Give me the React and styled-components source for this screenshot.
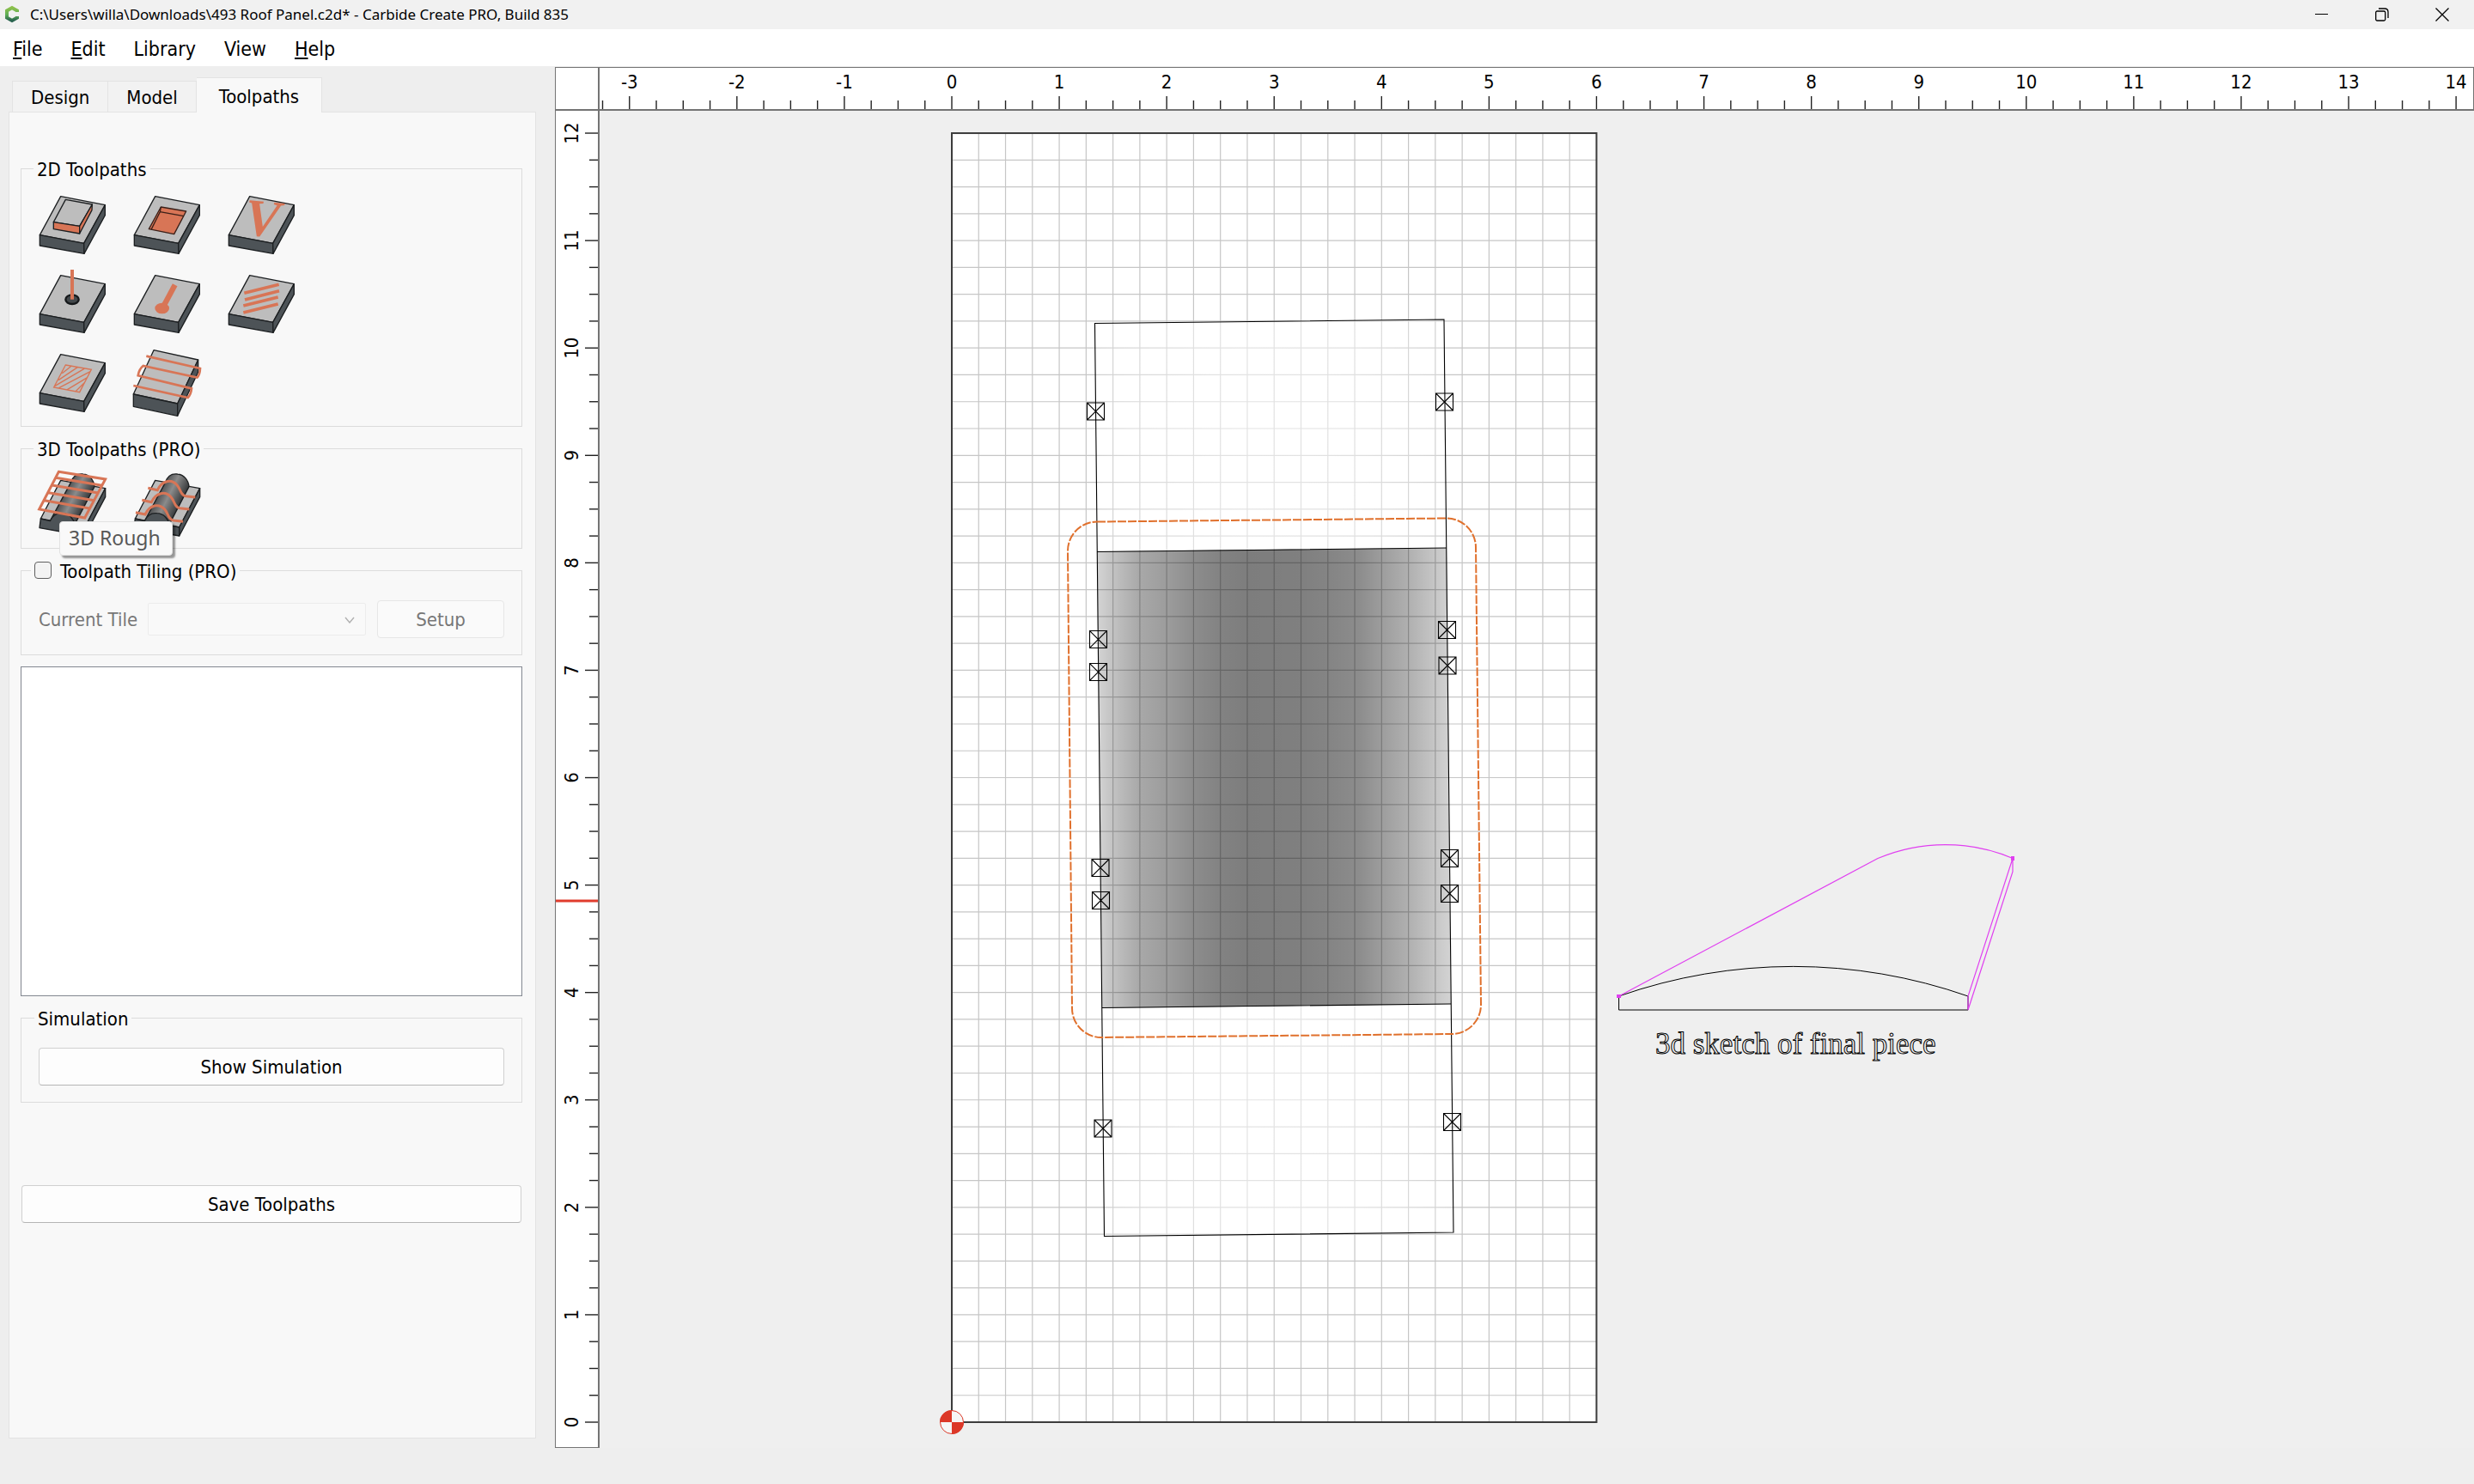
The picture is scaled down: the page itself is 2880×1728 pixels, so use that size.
import React from "react";
import styled, { createGlobalStyle, css } from "styled-components";

const GlobalStyle = createGlobalStyle`
  * {
    box-sizing: border-box;
  }
  body {
    margin: 0;
    background: #eeeeee;
    color: #000;
    font-family: "DejaVu Sans Condensed", "DejaVu Sans", sans-serif;
    font-size: 22px;
    line-height: 26px;
  }
  button,
  select,
  input {
    font: inherit;
    color: inherit;
  }
`;

// canvas scale: pixels per inch, and where the zero point sits in the view
const INCH = 125.08;
const ORIGIN_X = 410;
const ORIGIN_Y = 1527;

const ORANGE = "#d87556";
const TOP = "#bdbdbd";
const SIDE = "#4d5357";

const range = (from, to) =>
  Array.from({ length: to - from + 1 }, (_, i) => from + i);

/* ---------- toolpath icons ---------- */

const Block = () => (
  <g stroke="#1c1f21" strokeWidth="4" strokeLinejoin="round">
    <polygon points="80,20 235,50 161,184 7,155" fill={TOP} />
    <polygon points="7,155 161,184 162,220 7,192" fill={SIDE} />
    <polygon points="161,184 235,50 235,86 162,220" fill={SIDE} />
  </g>
);

const ContourIcon = () => (
  <>
    <Block />
    <g stroke="#1c1f21" strokeWidth="4" strokeLinejoin="round">
      <polygon points="97,31 190,48 146,124 55,110" fill={TOP} />
      <polygon points="55,110 146,124 146,150 55,134" fill={ORANGE} />
      <polygon points="146,124 190,48 189,68 146,150" fill={ORANGE} />
    </g>
  </>
);

const PocketIcon = () => (
  <>
    <Block />
    <g stroke="#3a2019" strokeWidth="4" strokeLinejoin="round">
      <polygon points="100,57 188,72 146,152 58,134" fill={ORANGE} />
      <path d="M100 57 L97 74 L180 89 M97 74 L66 136" fill="none" />
    </g>
  </>
);

const VCarveIcon = () => (
  <>
    <Block />
    <text
      x="58"
      y="156"
      fill={ORANGE}
      fontFamily="Liberation Serif, serif"
      fontSize="184"
      fontWeight="bold"
      fontStyle="italic"
      transform="rotate(5 90 154)"
    >
      V
    </text>
  </>
);

const DrillIcon = () => (
  <>
    <Block />
    <ellipse cx="120" cy="104" rx="23" ry="16" fill="#43484b" stroke="#15181a" strokeWidth="7" />
    <path d="M120 0 V104" stroke={ORANGE} strokeWidth="12" />
  </>
);

const KeyholeIcon = () => (
  <>
    <Block />
    <ellipse cx="104" cy="135" rx="25" ry="19" fill={ORANGE} />
    <path d="M149 53 L108 130" stroke={ORANGE} strokeWidth="19" />
  </>
);

const TextureIcon = () => (
  <>
    <Block />
    <path
      d="M61 82 L182 52 M63 105 L183 74 M58 126 L179 96 M58 150 L179 120"
      stroke={ORANGE}
      strokeWidth="11"
    />
  </>
);

const HatchIcon = () => (
  <>
    <Block />
    <path
      d="M97 57 L187 73 L146 152 L56 135 Z M85 86 L117 61 M72 110 L139 65 M60 130 L162 70 M74 137 L183 80 M103 143 L174 100 M132 149 L164 118"
      fill="none"
      stroke={ORANGE}
      strokeWidth="4"
    />
  </>
);

const FacingIcon = () => (
  <>
    <g stroke="#1c1f21" strokeWidth="4" strokeLinejoin="round">
      <polygon points="75,5 230,39 158,192 4,159" fill={TOP} />
      <polygon points="4,159 158,192 158,235 4,202" fill={SIDE} />
      <polygon points="158,192 230,39 230,82 158,235" fill={SIDE} />
    </g>
    <path
      d="M49 26 L237 69 Q236 92 226 101 L38 60 Q23 72 20 94 L207 139 Q205 160 194 171 L4 129"
      fill="none"
      stroke={ORANGE}
      strokeWidth="8"
    />
  </>
);

const Ridge = () => (
  <>
    <defs>
      <linearGradient id="ridge" gradientUnits="userSpaceOnUse" x1="78" y1="88" x2="166" y2="132">
        <stop offset="0" stopColor="#3d4042" />
        <stop offset="0.45" stopColor="#8b8b8b" />
        <stop offset="1" stopColor="#2d3032" />
      </linearGradient>
    </defs>
    <g stroke="#1c1f21" strokeWidth="4" strokeLinejoin="round">
      <polygon points="80,34 236,62 164,198 10,168" fill={TOP} />
      <polygon points="164,198 236,62 236,92 164,228" fill={SIDE} />
      <path
        d="M43 176 L116 40 C124 16 142 10 158 12 C180 14 196 32 198 56 L128 190 Z"
        fill="url(#ridge)"
      />
      <path
        d="M10 168 L43 176 C52 156 68 147 86 149 C110 150 126 168 130 191 L164 198 L164 228 L6 200 Z"
        fill={SIDE}
      />
    </g>
  </>
);

const RoughIcon = () => (
  <>
    <Ridge />
    <path
      d="M73 4 L236 30 L164 165 L5 135 Z M63 25 L224 52 M50 51 L211 78 M38 77 L197 104 M23 104 L181 132"
      fill="none"
      stroke={ORANGE}
      strokeWidth="9"
    />
  </>
);

const FinishIcon = () => (
  <>
    <Ridge />
    <path
      d="M55 61 L88 68 C104 34 136 28 156 50 C170 66 168 86 187 89 L220 93 M34 103 L67 110 C83 76 115 70 135 92 C149 108 147 128 166 131 L199 135 M12 146 L45 153 C61 119 93 113 113 135 C127 151 125 171 144 174 L177 178"
      fill="none"
      stroke={ORANGE}
      strokeWidth="9"
    />
  </>
);

const toolpaths2d = [
  { name: "Contour", Icon: ContourIcon },
  { name: "Pocket", Icon: PocketIcon },
  { name: "VCarve", Icon: VCarveIcon },
  { name: "Drill", Icon: DrillIcon },
  { name: "Keyhole", Icon: KeyholeIcon },
  { name: "Texture", Icon: TextureIcon },
  { name: "Engrave", Icon: HatchIcon },
  { name: "Facing", Icon: FacingIcon },
];

const toolpaths3d = [
  { name: "3D Rough", Icon: RoughIcon, tip: true },
  { name: "3D Finish", Icon: FinishIcon },
];

const ToolButtons = ({ tools }) => (
  <ToolGrid>
    {tools.map(({ name, Icon, tip }) => (
      <ToolCell key={name}>
        <ToolButton type="button" aria-label={name}>
          <svg viewBox="0 0 240 240" width="80" height="80">
            <Icon />
          </svg>
        </ToolButton>
        {tip && <Tooltip role="tooltip">{name}</Tooltip>}
      </ToolCell>
    ))}
  </ToolGrid>
);

/* ---------- rulers ---------- */

const TopRuler = () => (
  <RulerX>
    <svg width="100%" height="48">
      {range(-13, 57).map((q) => {
        const x = ORIGIN_X + (q * INCH) / 4;
        return (
          <path key={q} d={`M${x} ${q % 4 === 0 ? 33 : 38} V48`} stroke="#222" strokeWidth="1.4" />
        );
      })}
      {range(-3, 14).map((n) => (
        <RulerText key={n} x={ORIGIN_X + n * INCH} y="24">
          {n}
        </RulerText>
      ))}
    </svg>
  </RulerX>
);

const SideRuler = () => (
  <RulerY>
    <svg width="49" height="100%">
      {range(0, 48).map((q) => {
        const y = ORIGIN_Y - (q * INCH) / 4;
        return (
          <path key={q} d={`M${q % 4 === 0 ? 34 : 39} ${y} H49`} stroke="#222" strokeWidth="1.4" />
        );
      })}
      {range(0, 12).map((n) => {
        const y = ORIGIN_Y - n * INCH;
        return (
          <RulerText key={n} x="26" y={y} transform={`rotate(-90 26 ${y})`}>
            {n}
          </RulerText>
        );
      })}
      <path d="M0 920 H50" stroke="#e03c2d" strokeWidth="3" />
    </svg>
  </RulerY>
);

/* ---------- drawing ---------- */

const holes = [
  [577.5, 350],
  [983.5, 339],
  [580.5, 615.5],
  [580.5, 653.5],
  [986.5, 604.5],
  [987, 646],
  [583, 881.5],
  [583.5, 919.5],
  [989.5, 870.5],
  [989.5, 911.5],
  [586, 1185],
  [992.5, 1177.5],
];

const shades = [
  [0, 0.17],
  [0.06, 0.26],
  [0.12, 0.34],
  [0.2, 0.39],
  [0.275, 0.45],
  [0.35, 0.49],
  [0.43, 0.51],
  [0.58, 0.5],
  [0.66, 0.48],
  [0.74, 0.45],
  [0.81, 0.38],
  [0.89, 0.3],
  [1, 0.17],
];

const Shade = ({ id, color }) => (
  <linearGradient id={id}>
    {shades.map(([offset, opacity]) => (
      <stop key={offset} offset={offset} stopColor={color} stopOpacity={opacity} />
    ))}
  </linearGradient>
);

const Drawing = () => {
  const w = 6 * INCH;
  const h = 12 * INCH;
  const top = ORIGIN_Y - h;
  return (
    <svg width="100%" height="100%">
      <defs>
        <Shade id="dark" color="#000" />
        <Shade id="light" color="#fff" />
      </defs>

      {/* stock and grid */}
      <rect x={ORIGIN_X} y={top} width={w} height={h} fill="#fff" />
      <g stroke="#c6c6c6" strokeWidth="1.2">
        {range(1, 23).map((q) => (
          <path key={q} d={`M${ORIGIN_X + (q * INCH) / 4} ${top} v${h}`} />
        ))}
        {range(1, 47).map((q) => (
          <path key={q} d={`M${ORIGIN_X} ${top + (q * INCH) / 4} h${w}`} />
        ))}
      </g>
      <rect x={ORIGIN_X} y={top} width={w} height={h} fill="none" stroke="#3c3c3c" strokeWidth="2" />

      {/* part */}
      <polygon points="576,247 983,243 986,509 579,513" fill="url(#light)" />
      <polygon points="585,1045 991,1040 994,1306 587,1310" fill="url(#light)" />
      <polygon points="579,513 986,509 991,1040 585,1045" fill="url(#dark)" />
      <g fill="none" stroke="#000" strokeWidth="1.1">
        <polygon points="576.5,247.5 983,243 994,1306 587.5,1310.5" />
        <path d="M579 513.5 L986 509 M585 1044.5 L991 1040" />
        {holes.map(([x, y]) => (
          <path
            key={`${x}-${y}`}
            d={`M${x - 10} ${y - 10} h20 v20 h-20 Z l20 20 m0 -20 l-20 20`}
          />
        ))}
      </g>
      <path
        d="M579 478.5 L986 474.5 A34 34 0 0 1 1020 508 L1026 1040 A34 34 0 0 1 992 1075 L585 1079 A34 34 0 0 1 550 1045 L545 513 A34 34 0 0 1 579 478.5 Z"
        fill="none"
        stroke="#e0702c"
        strokeWidth="2"
        strokeDasharray="10 2"
      />

      {/* sketch beside the stock */}
      <g fill="none">
        <path d="M1186.5 1031 V1047 H1593 V1031 A614 614 0 0 0 1186.5 1031" stroke="#000" />
        <path
          d="M1186.5 1031 L1488 870.5 A201 201 0 0 1 1645 870.5 V886 L1593 1047 V1031 L1645 870.5"
          stroke="#e03ff0"
          strokeWidth="1.2"
        />
      </g>
      <rect x="1184" y="1029" width="5" height="4" fill="#e03ff0" />
      <rect x="1643" y="868" width="4" height="5" fill="#e03ff0" />
      <SketchText x="1229" y="1098">
        3d sketch of final piece
      </SketchText>

      {/* zero point */}
      <g transform={`translate(${ORIGIN_X} ${ORIGIN_Y})`}>
        <circle r="13.5" fill="#f6f6f6" stroke="#dc3828" />
        <path
          d="M0 0 H-14 A14 14 0 0 1 0 -14 Z M0 0 H14 A14 14 0 0 1 0 14 Z"
          fill="#dc3828"
        />
      </g>
    </svg>
  );
};

/* ---------- page ---------- */

const App = () => {
  return (
    <Window>
      <GlobalStyle />
      <TitleBar>
        <svg width="18" height="22" viewBox="0 0 18 22">
          <defs>
            <linearGradient id="logo" x1="0" y1="0" x2="0" y2="1">
              <stop offset="0" stopColor="#8cc04b" />
              <stop offset="0.55" stopColor="#5fae57" />
              <stop offset="1" stopColor="#28624f" />
            </linearGradient>
          </defs>
          <path
            d="M15 8 V6.5 L9 3 L3 6.5 V14.5 L9 18 L15 14.5 V13"
            fill="none"
            stroke="url(#logo)"
            strokeWidth="4"
          />
        </svg>
        <Title>C:\Users\willa\Downloads\493 Roof Panel.c2d* - Carbide Create PRO, Build 835</Title>
        <WindowButton type="button" aria-label="Minimize">
          <svg width="16" height="16">
            <path d="M0 7.5 H15" stroke="#000" />
          </svg>
        </WindowButton>
        <WindowButton type="button" aria-label="Restore">
          <svg width="16" height="16" fill="none" stroke="#000" strokeWidth="1.3">
            <rect x="0.7" y="4" width="11" height="11" rx="1.5" />
            <path d="M4 1 H11 Q15 1 15 5 V12" />
          </svg>
        </WindowButton>
        <WindowButton type="button" aria-label="Close">
          <svg width="16" height="16">
            <path d="M0.5 0.5 L15.5 15.5 M15.5 0.5 L0.5 15.5" stroke="#000" strokeWidth="1.3" />
          </svg>
        </WindowButton>
      </TitleBar>

      <MenuBar>
        <MenuItem type="button"><u>F</u>ile</MenuItem>
        <MenuItem type="button"><u>E</u>dit</MenuItem>
        <MenuItem type="button">Library</MenuItem>
        <MenuItem type="button">View</MenuItem>
        <MenuItem type="button"><u>H</u>elp</MenuItem>
      </MenuBar>

      <Main>
        <Sidebar>
          <Tabs role="tablist">
            <Tab type="button" role="tab">Design</Tab>
            <Tab type="button" role="tab">Model</Tab>
            <Tab type="button" role="tab" aria-selected="true" $active>Toolpaths</Tab>
          </Tabs>
          <Panel>
            <Group>
              <legend>2D Toolpaths</legend>
              <ToolButtons tools={toolpaths2d} />
            </Group>
            <Group>
              <legend>3D Toolpaths (PRO)</legend>
              <ToolButtons tools={toolpaths3d} />
            </Group>
            <Group $roomy $checkable>
              <CheckLegend>
                <CheckBox type="checkbox" id="tiling" />
                <label htmlFor="tiling">Toolpath Tiling (PRO)</label>
              </CheckLegend>
              <TileRow>
                <label htmlFor="tile">Current Tile</label>
                <SelectWrap>
                  <TileSelect id="tile" disabled />
                  <svg width="12" height="8" viewBox="0 0 12 8">
                    <path d="M1 1 L6 7 L11 1" fill="none" stroke="#b0b0b0" strokeWidth="1.4" />
                  </svg>
                </SelectWrap>
                <SetupButton type="button" disabled>Setup</SetupButton>
              </TileRow>
            </Group>
            <ToolpathList role="listbox" aria-label="Toolpaths" />
            <Group $roomy>
              <legend>Simulation</legend>
              <PushButton type="button">Show Simulation</PushButton>
            </Group>
            <SaveArea>
              <PushButton type="button">Save Toolpaths</PushButton>
            </SaveArea>
          </Panel>
        </Sidebar>

        <Workspace>
          <Corner />
          <TopRuler />
          <SideRuler />
          <Viewport>
            <Drawing />
          </Viewport>
        </Workspace>
      </Main>
    </Window>
  );
};

const Window = styled.div`
  display: flex;
  flex-direction: column;
  min-height: 100vh;
  padding-bottom: 42px;
`;

const TitleBar = styled.header`
  display: flex;
  align-items: center;
  height: 34px;
  padding: 0 14px 0 5px;
  background: #f1f1f1;
`;

const Title = styled.span`
  flex: 1;
  margin-left: 12px;
  font-family: "Noto Sans", sans-serif;
  font-size: 17px;
`;

const WindowButton = styled.button`
  display: grid;
  place-items: center;
  width: 70px;
  height: 34px;
  padding: 0;
  border: 0;
  background: none;
  &:last-child {
    width: 46px;
    margin-left: 12px;
  }
`;

const MenuBar = styled.nav`
  display: flex;
  align-items: center;
  gap: 33px;
  height: 43px;
  padding: 2px 15px 0;
  background: #fff;
`;

const MenuItem = styled.button`
  padding: 0;
  border: 0;
  background: none;
  font-size: 23px;
  u {
    text-decoration-thickness: 2px;
    text-underline-offset: 2px;
  }
`;

const Main = styled.main`
  display: flex;
  flex: 1;
`;

const Sidebar = styled.aside`
  display: flex;
  flex-direction: column;
  flex: 0 0 646px;
  padding: 13px 22px 11px 10px;
`;

const Tabs = styled.div`
  display: flex;
  align-items: flex-end;
  padding-left: 4px;
`;

const Tab = styled.button`
  height: 36px;
  padding: 3px 21px 0;
  border: 1px solid #e3e3e3;
  border-bottom: 0;
  background: #f2f2f2;
  & + & {
    border-left: 0;
  }
  ${({ $active }) =>
    $active &&
    css`
      position: relative;
      height: 41px;
      margin-bottom: -1px;
      padding: 3px 26px 0;
      background: #f8f8f8;
    `}
`;

const Panel = styled.section`
  display: flex;
  flex-direction: column;
  gap: 10px;
  flex: 1;
  padding: 50px 15px 20px 13px;
  border: 1px solid #e3e3e3;
  background: #f8f8f8;
`;

const Group = styled.fieldset`
  min-width: 0;
  margin: 0;
  padding: ${({ $roomy }) => ($roomy ? "20px 20px 19px" : "11px 20px 10px 19px")};
  border: 1px solid #dcdcdc;
  legend {
    margin-left: ${({ $checkable }) => ($checkable ? "-9px" : "-5px")};
    padding: 4px 4px 0;
  }
`;

const ToolGrid = styled.div`
  display: grid;
  grid-template-columns: repeat(3, 80px);
  gap: 12px 30px;
`;

const ToolCell = styled.div`
  position: relative;
  height: 80px;
`;

const ToolButton = styled.button`
  padding: 0;
  border: 0;
  background: none;
  svg {
    display: block;
    overflow: visible;
  }
`;

const Tooltip = styled.span`
  position: absolute;
  z-index: 1;
  top: 59px;
  left: 25px;
  padding: 5px 13px 7px 10px;
  border: 1px solid #e2e2e2;
  border-radius: 4px;
  background: #f9f9f9;
  box-shadow: 3px 3px 2px rgba(0, 0, 0, 0.4);
  color: #575757;
  font-family: "Noto Sans", sans-serif;
  font-size: 23px;
  white-space: nowrap;
`;

const CheckLegend = styled.legend`
  display: flex;
  align-items: center;
  gap: 10px;
  label {
    line-height: 26px;
  }
`;

const CheckBox = styled.input`
  appearance: none;
  width: 20px;
  height: 20px;
  margin: 0 0 4px;
  border: 1px solid #5f5f5f;
  border-radius: 4px;
  background: #f3f3f3;
`;

const TileRow = styled.div`
  display: flex;
  align-items: center;
  color: #777;
  label {
    padding-top: 2px;
  }
`;

const SelectWrap = styled.span`
  position: relative;
  flex: 1;
  height: 38px;
  margin: 0 13px 0 12px;
  svg {
    position: absolute;
    top: 16px;
    right: 13px;
  }
`;

const TileSelect = styled.select`
  appearance: none;
  display: block;
  width: 100%;
  height: 100%;
  border: 1px solid #e8e8e8;
  border-radius: 2px;
  background: #fafafa;
`;

const PushButton = styled.button`
  display: block;
  width: 100%;
  height: 44px;
  padding: 2px 6px 0;
  border: 1px solid #d0d0d0;
  border-bottom-color: #b5b5b5;
  border-radius: 4px;
  background: #fdfdfd;
`;

const SetupButton = styled(PushButton)`
  width: 148px;
  border-color: #e6e6e6;
  background: #fafafa;
  color: #777;
`;

const ToolpathList = styled.div`
  height: 384px;
  margin-top: 3px;
  border: 1px solid #828790;
  background: #fff;
`;

const SaveArea = styled.div`
  padding: 86px 1px 0;
`;

const Workspace = styled.section`
  display: grid;
  grid-template-columns: 52px minmax(0, 1fr);
  grid-template-rows: 51px minmax(1557px, 1fr);
  flex: 1;
  margin-top: 1px;
  min-width: 0;
`;

const ruler = css`
  overflow: hidden;
  border: 1px solid #747474;
  background: #fff;
  svg {
    display: block;
  }
`;

const Corner = styled.div`
  ${ruler}
  border-width: 1px 2px 2px 1px;
`;

const RulerX = styled.div`
  ${ruler}
  border-width: 1px 1px 2px 0;
`;

const RulerY = styled.div`
  ${ruler}
  border-width: 0 2px 1px 1px;
`;

const RulerText = styled.text`
  font-size: 22px;
  text-anchor: middle;
`;

const Viewport = styled.div`
  overflow: hidden;
  background: #efefef;
  svg {
    display: block;
  }
`;

const SketchText = styled.text`
  fill: none;
  stroke: #000;
  stroke-width: 1px;
  font-family: "Liberation Serif", serif;
  font-size: 35px;
`;

export default App;
